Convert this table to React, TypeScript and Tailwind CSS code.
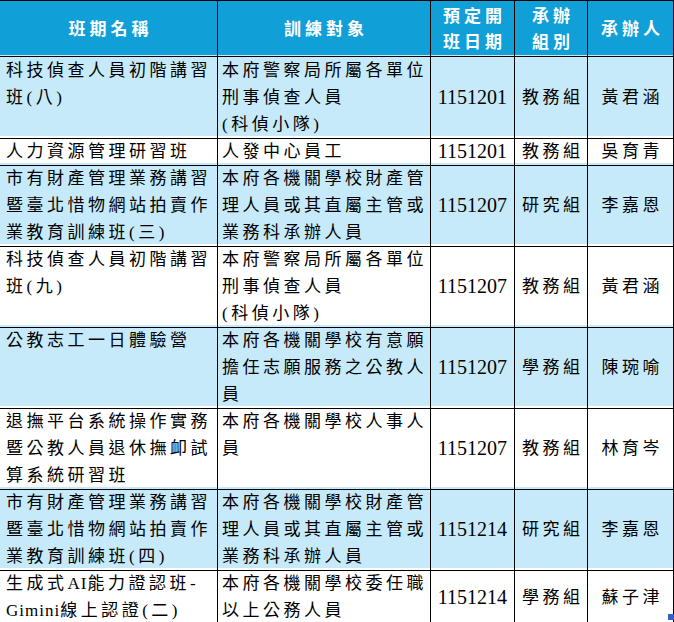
import React from "react";

type Row = {
  name: string[];
  target: string[];
  date: string;
  group: string;
  person: string;
  h: string;
  blue: boolean;
};

const rows: Row[] = [
  {
    name: ["科技偵查人員初階講習", "班(八)"],
    target: ["本府警察局所屬各單位", "刑事偵查人員", "(科偵小隊)"],
    date: "1151201",
    group: "教務組",
    person: "黃君涵",
    h: "h-[81px]",
    blue: true,
  },
  {
    name: ["人力資源管理研習班"],
    target: ["人發中心員工"],
    date: "1151201",
    group: "教務組",
    person: "吳育青",
    h: "h-[27px]",
    blue: false,
  },
  {
    name: ["市有財產管理業務講習", "暨臺北惜物網站拍賣作", "業教育訓練班(三)"],
    target: ["本府各機關學校財產管", "理人員或其直屬主管或", "業務科承辦人員"],
    date: "1151207",
    group: "研究組",
    person: "李嘉恩",
    h: "h-[81px]",
    blue: true,
  },
  {
    name: ["科技偵查人員初階講習", "班(九)"],
    target: ["本府警察局所屬各單位", "刑事偵查人員", "(科偵小隊)"],
    date: "1151207",
    group: "教務組",
    person: "黃君涵",
    h: "h-[81px]",
    blue: false,
  },
  {
    name: ["公教志工一日體驗營"],
    target: ["本府各機關學校有意願", "擔任志願服務之公教人", "員"],
    date: "1151207",
    group: "學務組",
    person: "陳琬喻",
    h: "h-[81px]",
    blue: true,
  },
  {
    name: ["退撫平台系統操作實務", "暨公教人員退休撫卹試", "算系統研習班"],
    target: ["本府各機關學校人事人", "員"],
    date: "1151207",
    group: "教務組",
    person: "林育岑",
    h: "h-[81px]",
    blue: false,
  },
  {
    name: ["市有財產管理業務講習", "暨臺北惜物網站拍賣作", "業教育訓練班(四)"],
    target: ["本府各機關學校財產管", "理人員或其直屬主管或", "業務科承辦人員"],
    date: "1151214",
    group: "研究組",
    person: "李嘉恩",
    h: "h-[81px]",
    blue: true,
  },
  {
    name: ["生成式AI能力證認班-", "Gimini線上認證(二)"],
    target: ["本府各機關學校委任職", "以上公務人員"],
    date: "1151214",
    group: "學務組",
    person: "蘇子津",
    h: "h-[54px]",
    blue: false,
  },
];

const cols = "grid grid-cols-[218px_213px_84px_73px_86px]";
const cell = "border-r border-b border-black overflow-visible";

function Line({ text }: { text: string }) {
  const parts = text.split(/([A-Za-z]+)/);
  return (
    <div className="whitespace-nowrap">
      {parts.map((p, i) =>
        /^[A-Za-z]+$/.test(p) ? (
          <span key={i} className="tracking-[1px]">
            {p}
          </span>
        ) : (
          <span key={i}>{p}</span>
        )
      )}
    </div>
  );
}

function Centered({ children }: { children: React.ReactNode }) {
  return <span className="mr-[-3.5px]">{children}</span>;
}

export default function App() {
  return (
    <div className="relative w-[674px] h-[622px] bg-white border-t border-black font-['Liberation_Serif','Noto_Sans_CJK_TC',serif] text-black">
      {/* header */}
      <div className={`${cols} h-[54px] bg-[#109fd7] text-white font-bold text-[17px] leading-[26px] tracking-[4px]`}>
        {[["班期名稱"], ["訓練對象"], ["預定開", "班日期"], ["承辦", "組別"], ["承辦人"]].map((lines, i) => (
          <div key={i} className={`${cell} flex flex-col items-center justify-center pt-[3px]`}>
            {lines.map((l) => (
              <span key={l} className="mr-[-4px]">
                {l}
              </span>
            ))}
          </div>
        ))}
      </div>

      {rows.map((r, i) => (
        <div
          key={i}
          className={`${cols} ${r.h} ${r.blue ? "bg-[#c6eafa]" : "bg-white"} text-[17px] leading-[27px] tracking-[3.5px]`}
        >
          <div className={`${cell} pl-[6px] pt-[2px]`}>
            {r.name.map((l) => (
              <Line key={l} text={l} />
            ))}
          </div>
          <div className={`${cell} pl-[4px] pt-[2px]`}>
            {r.target.map((l) => (
              <Line key={l} text={l} />
            ))}
          </div>
          <div className={`${cell} flex items-center justify-center pt-[2px]`}>
            <span className="text-[20px] tracking-normal">{r.date}</span>
          </div>
          <div className={`${cell} flex items-center justify-center pt-[2px]`}>
            <Centered>{r.group}</Centered>
          </div>
          <div className={`${cell} flex items-center justify-center pt-[2px]`}>
            <Centered>{r.person}</Centered>
          </div>
        </div>
      ))}

      {/* excel fill handle */}
      <div className="absolute right-0 bottom-[2px] w-[6px] h-[6px] bg-[#3b5fc9]" />
    </div>
  );
}
